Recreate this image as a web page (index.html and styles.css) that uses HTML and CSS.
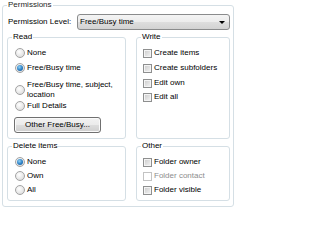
FILE: index.html
```html
<!DOCTYPE html>
<html>
<head>
<meta charset="utf-8">
<link rel="stylesheet" href="styles.css">
</head>
<body>
<fieldset class="perm">
  <legend class="perm-legend">Permissions</legend>
  <div class="level-row">
    <span class="level-label">Permission Level:</span>
    <div class="select"><span class="select-text">Free/Busy time</span><span class="arrow"></span></div>
  </div>
  <div class="groups">
    <fieldset class="group left read">
      <legend>Read</legend>
      <div class="list">
        <div class="opt"><span class="radio"></span><span>None</span></div>
        <div class="opt"><span class="radio on"></span><span>Free/Busy time</span></div>
        <div class="opt wrap"><span class="radio"></span><span class="wrap-text">Free/Busy time, subject, location</span></div>
        <div class="opt after-wrap"><span class="radio"></span><span>Full Details</span></div>
      </div>
      <button class="btn">Other Free/Busy...</button>
    </fieldset>
    <fieldset class="group right">
      <legend>Write</legend>
      <div class="list">
        <div class="opt"><span class="check"></span><span>Create items</span></div>
        <div class="opt"><span class="check"></span><span>Create subfolders</span></div>
        <div class="opt"><span class="check"></span><span>Edit own</span></div>
        <div class="opt tight"><span class="check"></span><span>Edit all</span></div>
      </div>
    </fieldset>
    <fieldset class="group left">
      <legend>Delete items</legend>
      <div class="list compact">
        <div class="opt"><span class="radio on"></span><span>None</span></div>
        <div class="opt"><span class="radio"></span><span>Own</span></div>
        <div class="opt"><span class="radio"></span><span>All</span></div>
      </div>
    </fieldset>
    <fieldset class="group right">
      <legend>Other</legend>
      <div class="list compact">
        <div class="opt"><span class="check"></span><span>Folder owner</span></div>
        <div class="opt disabled"><span class="check"></span><span>Folder contact</span></div>
        <div class="opt"><span class="check"></span><span>Folder visible</span></div>
      </div>
    </fieldset>
  </div>
</fieldset>
</body>
</html>
```

FILE: styles.css
```css
html, body {
  margin: 0;
  padding: 0;
  background: #ffffff;
}

body {
  font-family: "Liberation Sans", Arial, sans-serif;
  font-size: 8px;
  line-height: 10px;
  color: #000000;
}

fieldset {
  margin: 0;
  min-width: 0;
  border: 1px solid #d5dfe5;
  border-radius: 3px;
}

legend {
  padding: 0 1px;
  line-height: 10px;
}

.perm {
  width: 223px;
  margin: 0 0 0 2px;
  padding: 4px 3px 5px 4px;
}

.perm-legend {
  color: #1e1e1e;
}

.level-row {
  display: flex;
  align-items: center;
  height: 16px;
}

.level-label {
  margin-left: 1px;
  width: 69px;
}

.select {
  flex: 1;
  box-sizing: border-box;
  height: 16px;
  border: 1px solid #8a8b8c;
  border-radius: 3px;
  background: linear-gradient(#f4f4f4, #ececec 50%, #dedede 50%, #d2d2d2);
  display: flex;
  align-items: center;
  justify-content: space-between;
  padding: 0 4px 0 2px;
}

.arrow {
  width: 0;
  height: 0;
  border-left: 3px solid transparent;
  border-right: 3px solid transparent;
  border-top: 3px solid #000000;
  margin-top: 1px;
}

.groups {
  display: grid;
  grid-template-columns: 119px 94px;
  column-gap: 10px;
  row-gap: 2px;
  margin-top: 2px;
}

.group {
  padding: 6px 4px 5px 7px;
}

.group legend {
  margin-left: -3px;
}

.group.right {
  padding-left: 6px;
}

.group.right legend {
  margin-left: -2px;
}

.list {
  display: flex;
  flex-direction: column;
}

.opt {
  display: flex;
  align-items: center;
  white-space: nowrap;
}

.opt + .opt {
  margin-top: 5px;
}

.opt.wrap {
  margin-top: 7px;
  white-space: normal;
}

.opt.after-wrap {
  margin-top: 1px;
}

.opt.tight {
  margin-top: 4px;
}

.list.compact .opt + .opt {
  margin-top: 4px;
}

.wrap-text {
  width: 94px;
}

.radio {
  flex: none;
  box-sizing: border-box;
  width: 10px;
  height: 10px;
  margin-right: 2px;
  border-radius: 50%;
  border: 1px solid #a3a3a3;
  background: radial-gradient(circle at 40% 35%, #ffffff, #e6e6e6 60%, #d4d4d4);
  position: relative;
}

.radio.on::after {
  content: "";
  position: absolute;
  left: 1px;
  top: 1px;
  width: 6px;
  height: 6px;
  border-radius: 50%;
  background: radial-gradient(circle at 40% 35%, #8fd0f5, #2a7fc4 55%, #1b4f8a);
}

.check {
  flex: none;
  box-sizing: border-box;
  width: 9px;
  height: 9px;
  margin-right: 2px;
  border: 1px solid #8e8f8f;
  background: linear-gradient(135deg, #c9c9c9, #e8e8e8 70%, #f4f4f4);
  box-shadow: inset 0 0 0 1px #f4f4f4;
}

.opt.disabled {
  color: #8d8d8d;
}

.opt.disabled .check {
  border-color: #c3c3c3;
  background: #ffffff;
  box-shadow: none;
}

.btn {
  display: block;
  box-sizing: border-box;
  margin: 6px 0 0 -1px;
  width: 87px;
  height: 16px;
  padding: 0;
  font-family: "Liberation Sans", Arial, sans-serif;
  font-size: 8px;
  line-height: 10px;
  color: #000000;
  border: 1px solid #707070;
  border-radius: 3px;
  background: linear-gradient(#f2f2f2, #ebebeb 50%, #dddddd 50%, #cfcfcf);
  box-shadow: inset 0 0 0 1px #fafafa;
}
```
